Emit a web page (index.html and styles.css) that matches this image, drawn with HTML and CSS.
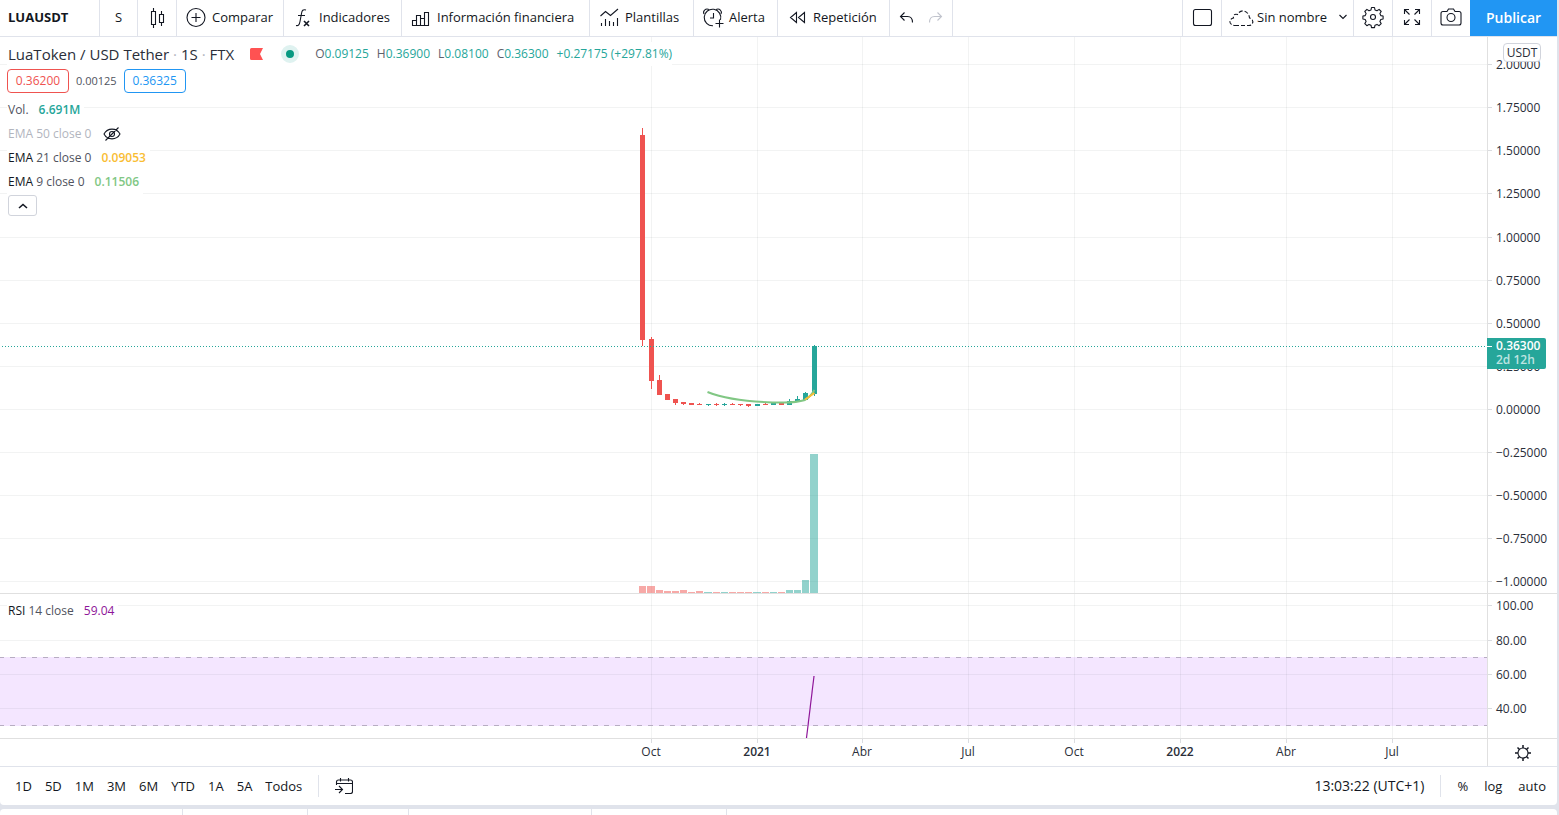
FILE: index.html
```html
<!DOCTYPE html>
<html lang="es">
<head>
<meta charset="utf-8">
<title>LUAUSDT</title>
<link rel="stylesheet" href="styles.css">
</head>
<body>
<div class="app">
  <header class="toolbar">
    <button class="tool tool-symbol">LUAUSDT</button>
    <button class="tool tool-icon">S</button>
    <button class="tool tool-icon" aria-label="Velas">
      <svg width="28" height="28" viewBox="0 0 28 28" class="ico"><path d="M8.500 8.500h4v13h-4zM10.500 5v3.500M10.500 21.500V25M16.500 11.500h4v8h-4zM18.500 8v3.500M18.500 19.500V23"/></svg>
    </button>
    <button class="tool tool-compare">
      <svg width="28" height="28" viewBox="0 0 28 28" class="ico"><circle cx="14" cy="14.500" r="9"/><path d="M9.500 14.500h9M14 10v9"/></svg>Comparar
    </button>
    <button class="tool tool-indicators">
      <svg width="28" height="28" viewBox="0 0 28 28" class="ico"><path d="M7 22.500c2.500.500 3.500-1 4-4l1.500-8c.4-3 1.500-4.500 4.500-3.500M9 12.500h7"/><path d="M15 18l5 5M20 18l-5 5" stroke-width="1.600"/></svg>Indicadores
    </button>
    <button class="tool tool-financials">
      <svg width="28" height="28" viewBox="0 0 28 28" class="ico"><path d="M5.500 22.500v-5h4v5zM9.500 22.500v-10h4v10M13.500 15.500h4v7M17.500 22.500v-13h4v13zM5.500 22.500h16"/></svg>Información financiera
    </button>
    <button class="tool tool-templates">
      <svg width="28" height="28" viewBox="0 0 28 28" class="ico"><path d="M5.500 13l5-4.500 5 4L23 6"/><path d="M6.500 20v3M10.500 16v7M14.500 18v5M18.500 19v4M22.500 15v8"/></svg>Plantillas
    </button>
    <button class="tool tool-alert">
      <svg width="28" height="28" viewBox="0 0 28 28" class="ico"><path d="M14 22.800a8.300 8.300 0 1 1 7.500-6"/><path d="M14.500 10v5H11M5 11c-1.500-3 1.500-6 5-4.500M22 11c1.500-3-1.500-6-5-4.500"/><path d="M20.500 16.500v8M16.500 20.500h8"/></svg>Alerta
    </button>
    <button class="tool tool-replay">
      <svg width="28" height="28" viewBox="0 0 28 28" class="ico"><path d="M13.500 9.500v10l-6-5zM21.500 9.500v10l-6-5z"/></svg>Repetición
    </button>
    <div class="tool tool-history">
      <button class="plain" aria-label="Deshacer"><svg width="28" height="28" viewBox="0 0 28 28" class="ico"><path d="M11.500 9.500l-4 4 4 4M7.500 13.500h7q5 0 5 6"/></svg></button>
      <button class="plain" aria-label="Rehacer" disabled><svg width="28" height="28" viewBox="0 0 28 28" class="ico ico-muted"><path d="M16.500 9.500l4 4-4 4M20.500 13.500h-7q-5 0-5 6"/></svg></button>
    </div>
    <div class="spacer"></div>
    <button class="tool tool-icon" aria-label="Disposición">
      <svg width="28" height="28" viewBox="0 0 28 28" class="ico"><rect x="5.500" y="6.500" width="18" height="16" rx="2"/></svg>
    </button>
    <button class="tool tool-layout">
      <svg width="28" height="28" viewBox="0 0 28 28" class="ico"><path d="M8 22.500h14c5 0 5-7 .500-7.500C22 8 14 5 10.500 11.500 7 10.500 6 13 6.500 15 1 16 2 22.500 8 22.500z" stroke-dasharray="4 2"/></svg>
      <span>Sin nombre</span>
      <svg width="10" height="6" viewBox="0 0 10 6" class="ico"><path d="M1.500 1L5 4.500 8.500 1"/></svg>
    </button>
    <button class="tool tool-icon" aria-label="Ajustes">
      <svg width="28" height="28" viewBox="0 0 28 28" class="ico"><circle cx="14" cy="14" r="2.500"/><path d="M12.500 4.500h3l.5 2.400 2 .8 2.100-1.300 2.100 2.100-1.300 2 .9 2.100 2.300.4v3l-2.300.5-.9 2 1.300 2.100-2.100 2.100-2.100-1.300-2 .8-.5 2.400h-3l-.5-2.400-2-.8-2.100 1.300-2.100-2.100 1.300-2.100-.9-2-2.300-.5v-3l2.300-.4.9-2.100-1.300-2 2.100-2.100L10 7.700l2-.8z" stroke-linejoin="round"/></svg>
    </button>
    <button class="tool tool-icon" aria-label="Pantalla completa">
      <svg width="28" height="28" viewBox="0 0 28 28" class="ico"><path d="M6.500 11V6.500H11M6.500 6.500l5 5M17 6.500h4.500V11M21.500 6.500l-5 5M6.500 17v4.500H11M6.500 21.500l5-5M21.500 17v4.500H17M21.500 21.500l-5-5"/></svg>
    </button>
    <button class="tool tool-icon tool-last" aria-label="Captura">
      <svg width="28" height="28" viewBox="0 0 28 28" class="ico"><path d="M6 8.500h4L11.500 6h5L18 8.500h4q2 0 2 2v9.500q0 2-2 2H6q-2 0-2-2v-9.500q0-2 2-2z"/><circle cx="14" cy="14.500" r="4"/></svg>
    </button>
    <button class="publish">Publicar</button>
  </header>

  <main class="chart">
    <section class="pane">
      <svg class="plot" width="100%" height="556">
        <g class="grid">
          <path d="M0 27.500h4000M0 70.500h4000M0 113.500h4000M0 156.500h4000M0 200.500h4000M0 243.500h4000M0 286.500h4000M0 329.500h4000M0 372.500h4000M0 415.500h4000M0 458.500h4000M0 501.500h4000M0 544.500h4000"/>
          <path d="M651.500 0v556M757.500 0v556M862.500 0v556M968.500 0v556M1074.500 0v556M1180.500 0v556M1286.500 0v556M1392.500 0v556"/>
        </g>
        <path class="volume down" d="M639 549h7v7h-7zM647 549h8v7h-8zM656 553h7v3h-7zM664 554h7v2h-7zM672 554h7v2h-7zM680 553h7v3h-7zM688 555h7v1h-7zM696 554h7v2h-7zM713 555h7v1h-7zM729 555h7v1h-7zM737 555h7v1h-7zM745 555h7v1h-7zM762 555h7v1h-7zM778 555h7v1h-7z"/>
        <path class="volume up" d="M704 555h8v1h-8zM721 555h7v1h-7zM753 555h8v1h-8zM770 555h7v1h-7zM786 553h7v3h-7zM794 553h7v3h-7zM802 543h7v13h-7zM810 417h8v139h-8z"/>
        <path class="down" d="M640 98h5v205h-5zM642 91h1v218h-1zM649 302h5v42h-5zM651 300h1v52h-1zM657 343h5v15h-5zM659 338h1v6h-1zM665 357h5v6h-5zM673 362h5v4h-5zM675 366h1v2h-1zM681 365h5v2h-5zM683 367h1v1h-1zM689 366h5v2h-5zM697 367h5v1h-5zM699 366h1v2h-1zM714 367h5v1h-5zM716 366h1v3h-1zM730 367h5v1h-5zM732 366h1v2h-1zM738 367h5v1h-5zM740 367h1v2h-1zM746 367h5v2h-5zM748 367h1v3h-1zM763 367h5v1h-5zM765 366h1v2h-1zM779 366h5v2h-5z"/>
        <path class="up" d="M706 367h5v1h-5zM708 367h1v2h-1zM722 367h5v1h-5zM724 366h1v3h-1zM755 367h5v2h-5zM771 366h5v2h-5zM787 364h5v4h-5zM789 362h1v2h-1zM795 362h5v3h-5zM797 359h1v3h-1zM803 356h5v7h-5zM805 355h1v1h-1zM812 309h5v48h-5zM814 308h1v51h-1z"/>
        <path class="ema-fast" d="M707.500 355C725 362 752 365.500 784 365.500Q797 365.500 805 363 810 360 814.500 353"/>
        <path class="ema-slow" d="M805 362.500L814.500 356"/>
        <path class="last-price" d="M2 309.500h4000"/>
      </svg>
      <div class="legend">
        <div class="legend-title">
          <h1>LuaToken / USD Tether <i>·</i> 1S <i>·</i> FTX</h1>
          <svg class="flag" width="13" height="12" viewBox="0 0 13 12"><path d="M1.500 0H13L10 6l3 6H1.500Q0 12 0 10.500v-9Q0 0 1.500 0z"/></svg>
          <span class="status"></span>
          <p class="ohlc"><span>O<b>0.09125</b></span><span>H<b>0.36900</b></span><span>L<b>0.08100</b></span><span>C<b>0.36300</b></span><b>+0.27175 (+297.81%)</b></p>
        </div>
        <div class="quotes">
          <button class="quote sell">0.36200</button>
          <span class="spread">0.00125</span>
          <button class="quote buy">0.36325</button>
        </div>
        <div class="study"><span>Vol.</span><span class="v-volume">6.691M</span></div>
        <div class="study study-off"><span>EMA 50 close 0</span>
          <svg width="18" height="16" viewBox="0 0 18 16" class="ico"><path d="M1 8c3.500-6.500 12.500-6.500 16 0-3.500 6.500-12.500 6.500-16 0zM15.500 1.500l-13 13"/><circle cx="9" cy="8" r="2.500"/></svg>
        </div>
        <div class="study"><span><em>EMA</em> 21 close 0</span><span class="v-slow">0.09053</span></div>
        <div class="study"><span><em>EMA</em> 9 close 0</span><span class="v-fast">0.11506</span></div>
        <button class="collapse" aria-label="Contraer"><svg width="10" height="6" viewBox="0 0 10 6" class="ico"><path d="M1 5l4-3.500L9 5" stroke-width="1.600"/></svg></button>
      </div>
    </section>
    <aside class="axis">
      <svg width="100%" height="556">
        <path class="ticks" d="M0 27.500h4M0 70.500h4M0 113.500h4M0 156.500h4M0 200.500h4M0 243.500h4M0 286.500h4M0 329.500h4M0 372.500h4M0 415.500h4M0 458.500h4M0 501.500h4M0 544.500h4"/>
        <g class="scale">
          <text x="8" y="32">2.00000</text><text x="8" y="75">1.75000</text><text x="8" y="118">1.50000</text><text x="8" y="161">1.25000</text><text x="8" y="205">1.00000</text><text x="8" y="248">0.75000</text><text x="8" y="291">0.50000</text><text x="8" y="334">0.25000</text><text x="8" y="377">0.00000</text><text x="8" y="420">−0.25000</text><text x="8" y="463">−0.50000</text><text x="8" y="506">−0.75000</text><text x="8" y="549">−1.00000</text>
        </g>
      </svg>
      <button class="currency">USDT</button>
      <div class="price-tag"><strong>0.36300</strong><span>2d 12h</span></div>
    </aside>

    <section class="pane pane-rsi">
      <svg class="plot" width="100%" height="144">
        <rect class="band" y="63" width="100%" height="69"/>
        <g class="grid">
          <path d="M0 11.500h4000M0 46.500h4000M0 80.500h4000M0 114.500h4000"/>
          <path d="M651.500 0v144M757.500 0v144M862.500 0v144M968.500 0v144M1074.500 0v144M1180.500 0v144M1286.500 0v144M1392.500 0v144"/>
        </g>
        <path class="band-edge" d="M-1 63.500h4000M-1 131.500h4000"/>
        <path class="rsi" d="M806.500 144L814 82"/>
      </svg>
      <div class="legend"><div class="study"><span><em>RSI</em> 14 close</span><span class="v-rsi">59.04</span></div></div>
    </section>
    <aside class="axis pane-rsi">
      <svg width="100%" height="144">
        <path class="ticks" d="M0 11.500h4M0 46.500h4M0 80.500h4M0 114.500h4"/>
        <g class="scale"><text x="8" y="16">100.00</text><text x="8" y="51">80.00</text><text x="8" y="85">60.00</text><text x="8" y="119">40.00</text></g>
      </svg>
    </aside>

    <div class="time">
      <svg class="plot" width="100%" height="27">
        <path class="ticks" d="M651.500 0v4M757.500 0v4M862.500 0v4M968.500 0v4M1074.500 0v4M1180.500 0v4M1286.500 0v4M1392.500 0v4"/>
        <g class="scale scale-time"><text x="651" y="17">Oct</text><text class="year" x="757" y="17">2021</text><text x="862" y="17">Abr</text><text x="968" y="17">Jul</text><text x="1074" y="17">Oct</text><text class="year" x="1180" y="17">2022</text><text x="1286" y="17">Abr</text><text x="1392" y="17">Jul</text></g>
      </svg>
    </div>
    <div class="time corner">
      <button class="plain" aria-label="Ajustes de escala"><svg width="16" height="16" viewBox="0 0 16 16" class="ico"><circle cx="8" cy="8" r="5"/><path d="M8 0v3M8 13v3M0 8h3M13 8h3M2.500 2.500l2 2M11.500 11.500l2 2M2.500 13.500l2-2M11.500 4.500l2-2" stroke-width="1.500"/></svg></button>
    </div>
  </main>

  <footer class="bottom">
    <nav class="ranges">
      <button class="plain">1D</button><button class="plain">5D</button><button class="plain">1M</button><button class="plain">3M</button><button class="plain">6M</button><button class="plain">YTD</button><button class="plain">1A</button><button class="plain">5A</button><button class="plain">Todos</button>
    </nav>
    <span class="rule"></span>
    <button class="plain" aria-label="Ir a"><svg width="18" height="16" viewBox="0 0 18 16" class="ico"><path d="M1.500 7V4q0-2 2-2h12q2 0 2 2v9.500q0 2-2 2H10M1.500 5.500h16M5.500 0v3.500M13.500 0v3.500M0 11.500h7.500M4 8l3.500 3.500L4 15"/></svg></button>
    <div class="spacer"></div>
    <button class="plain clock">13:03:22 (UTC+1)</button>
    <span class="rule"></span>
    <div class="modes"><button class="plain">%</button><button class="plain">log</button><button class="plain">auto</button></div>
  </footer>
</div>
<div class="tabs"><span class="tab tab-a"></span><span class="tab tab-b"></span><span class="tab tab-c"></span><span class="tab tab-a"></span><span class="tab tab-d"></span></div>
</body>
</html>
```

FILE: styles.css
```css
* { box-sizing: border-box; }
body {
  margin: 0;
  min-height: 100vh;
  padding-right: 2px;
  display: flex;
  flex-direction: column;
  gap: 4px;
  overflow: hidden;
  background: #e0e3eb;
  color: #131722;
  font: 13px/18px "Trebuchet MS", "Open Sans", sans-serif;
}
button { font: inherit; color: inherit; background: none; border: 0; padding: 0; margin: 0; white-space: nowrap; }
svg { display: block; flex: none; }
.ico { fill: none; stroke: #131722; stroke-width: 1.1; }
.ico-muted { stroke: #c1c4cd; }
.app { background: #fff; border-radius: 0 0 4px 4px; }
.spacer { flex: 1; }
.plain { display: flex; align-items: center; }

.toolbar { display: flex; height: 37px; border-bottom: 1px solid #e0e3eb; }
.tool {
  display: flex;
  align-items: center;
  flex: none;
  gap: 2px;
  padding: 0 0 2px 5px;
  border-right: 1px solid #e0e3eb;
}
.tool-symbol { width: 100px; padding-left: 8px; font-weight: 700; }
.tool-icon { width: 39px; padding-left: 0; justify-content: center; }
.tool-symbol + .tool-icon { width: 38px; }
.tool-compare { width: 107px; }
.tool-indicators { width: 118px; }
.tool-financials { width: 188px; }
.tool-templates { width: 104px; }
.tool-alert { width: 84px; }
.tool-replay { width: 112px; }
.tool-history { width: 63px; gap: 0; padding-left: 3px; }
.spacer + .tool-icon { width: 40px; border-left: 1px solid #e0e3eb; }
.tool-layout { width: 132px; padding-right: 5px; }
.tool-layout span { flex: 1; text-align: left; }
.tool-last { width: 38px; border-right: 0; }
.publish { width: 87px; height: 36px; background: #2196f3; color: #fff; font-size: 14px; font-weight: 600; }

.chart { display: grid; grid-template-columns: minmax(0, 1fr) 70px; }
.pane { position: relative; overflow: hidden; }
.axis { position: relative; border-left: 1px solid #e0e0e0; }
.pane-rsi, .time { border-top: 1px solid #e0e0e0; }
.grid { stroke: #2a2e39; stroke-opacity: .06; fill: none; }
.up { fill: #26a69a; }
.down { fill: #ef5350; }
.volume { fill-opacity: .5; }
.ema-fast { fill: none; stroke: #81c784; stroke-width: 2; }
.ema-slow { fill: none; stroke: #f9bd33; stroke-width: 2; }
.last-price { stroke: #26a69a; stroke-dasharray: 1 2; }
.band { fill: #f4e6ff; }
.band-edge { fill: none; stroke: #b7adc2; stroke-dasharray: 5 6; }
.rsi { fill: none; stroke: #8e1599; stroke-width: 1.2; }
.ticks { stroke: #dadce0; }
.scale { font-size: 12px; fill: #2a2e39; }
.scale-time { text-anchor: middle; }
.year { font-weight: 600; }

.legend { position: absolute; left: 7px; top: 5px; }
.legend-title { display: flex; align-items: center; height: 24px; background: #fff; }
h1 { margin: 0; padding-left: 1px; font-size: 15px; line-height: 24px; font-weight: 400; color: #2a2e39; }
h1 i { color: #b2b5be; font-style: normal; }
.flag { margin-left: 16px; fill: #ff5252; }
.status { width: 18px; height: 18px; margin: 0 16px 0 18px; border: 5px solid #dff2f0; border-radius: 50%; background: #089981; }
.ohlc { display: flex; gap: 8px; margin: 0; font-size: 12px; color: #5d606b; }
.ohlc b { font-weight: 400; color: #26a69a; }
.quotes { display: flex; align-items: center; gap: 7px; margin: 3px 0 5px; }
.quote { width: 62px; height: 24px; border: 1px solid; border-radius: 4px; background: #fff; font-size: 12px; }
.sell { color: #ef5350; }
.buy { color: #2196f3; }
.spread { font-size: 11px; color: #50535e; }
.study { display: flex; align-items: center; gap: 10px; width: max-content; height: 24px; padding: 0 4px 0 1px; background: #fff; font-size: 12px; color: #50535e; }
.study em { font-style: normal; color: #131722; }
.study-off { gap: 12px; color: #b2b5be; }
.v-volume { color: #26a69a; }
.v-slow { color: #f9bd33; }
.v-fast { color: #81c784; }
.v-volume, .v-slow, .v-fast { font-weight: 600; }
.v-rsi { color: #8e1599; }
.collapse { display: flex; align-items: center; justify-content: center; width: 29px; height: 21px; margin: 1px 0 0 1px; border: 1px solid #d1d4dc; border-radius: 3px; background: #fff; }

.currency { position: absolute; left: 15px; top: 6px; width: 38px; height: 19px; border: 1px solid #d1d4dc; border-radius: 4px; background: #fff; color: #2a2e39; font-size: 12px; line-height: 16px; }
.price-tag { position: absolute; left: -1px; top: 301px; width: 59px; height: 31px; padding: 1px 0 0 9px; border-radius: 0 2px 2px 0; background: #26a69a; color: #fff; font-size: 12px; line-height: 14px; }
.price-tag strong, .price-tag span { display: block; font-weight: 600; }
.price-tag span { color: #bee4e1; }
.price-tag::before { content: ""; position: absolute; left: 0; top: 8px; width: 5px; height: 1px; background: #fff; }
.corner { display: flex; align-items: center; justify-content: center; border-left: 1px solid #e0e0e0; }

.bottom { display: flex; align-items: center; height: 39px; padding: 0 11px 0 15px; border-top: 1px solid #e0e3eb; }
.ranges { display: flex; gap: 13px; }
.modes { display: flex; gap: 16px; }
.clock { font-size: 14px; }
.rule { width: 1px; height: 22px; margin: 0 16px; background: #e0e3eb; }

.tabs { display: flex; flex: 1; min-height: 6px; background: #fff; border-radius: 4px 4px 0 0; }
.tab { border-right: 1px solid #e0e3eb; }
.tab-a { width: 183px; }
.tab-b { width: 125px; }
.tab-c { width: 101px; }
.tab-d { width: 135px; }
```
